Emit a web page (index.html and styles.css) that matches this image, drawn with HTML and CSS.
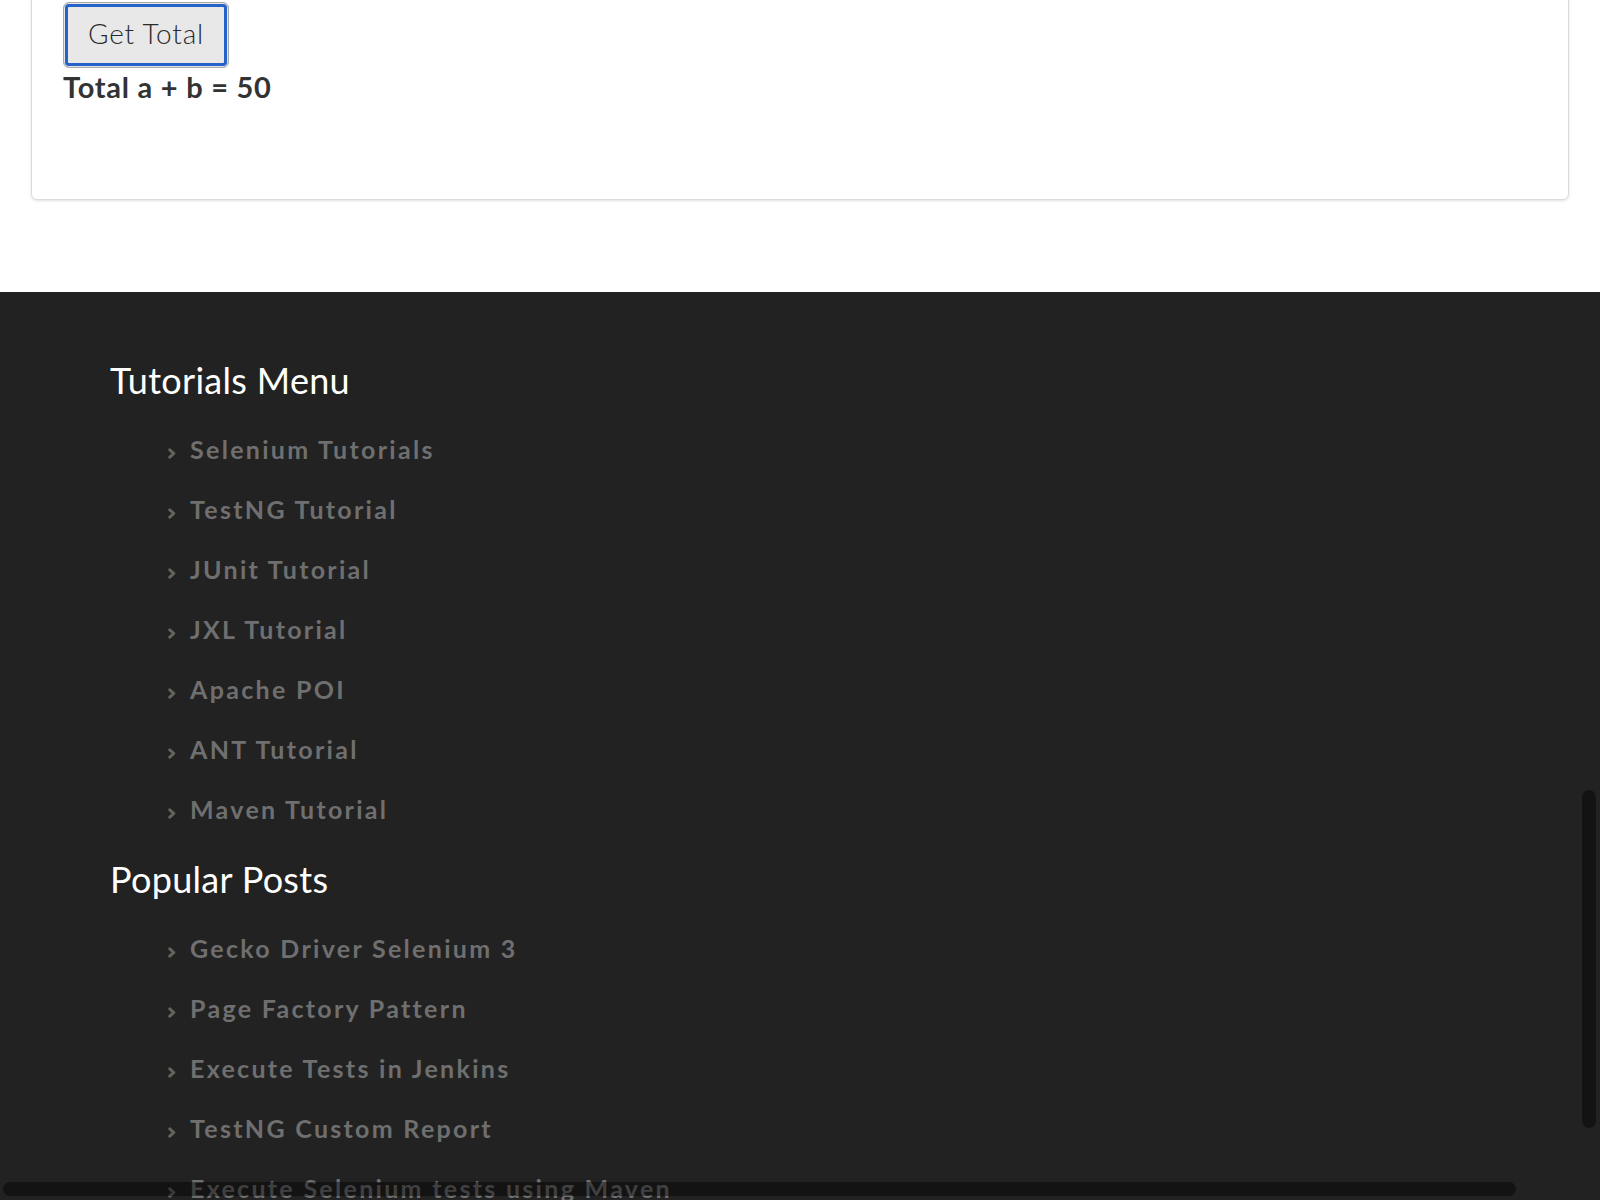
FILE: index.html
```html
<!DOCTYPE html>
<html lang="en">
<head>
<meta charset="utf-8">
<title>Get Total</title>
<link rel="stylesheet" href="styles.css">
</head>
<body>
<main class="page">
  <section class="card">
    <button class="btn" type="button">Get Total</button>
    <div class="total">Total a + b = 50</div>
  </section>
</main>
<footer class="footer">
  <h2 class="footer-title">Tutorials Menu</h2>
  <ul class="links">
    <li><svg class="chev" viewBox="0 0 8 11" width="8" height="11"><path d="M1.8 1.8 L5.8 5.5 L1.8 9.2" fill="none" stroke="currentColor" stroke-width="3" stroke-linecap="round" stroke-linejoin="round"/></svg><a href="#">Selenium Tutorials</a></li>
    <li><svg class="chev" viewBox="0 0 8 11" width="8" height="11"><path d="M1.8 1.8 L5.8 5.5 L1.8 9.2" fill="none" stroke="currentColor" stroke-width="3" stroke-linecap="round" stroke-linejoin="round"/></svg><a href="#">TestNG Tutorial</a></li>
    <li><svg class="chev" viewBox="0 0 8 11" width="8" height="11"><path d="M1.8 1.8 L5.8 5.5 L1.8 9.2" fill="none" stroke="currentColor" stroke-width="3" stroke-linecap="round" stroke-linejoin="round"/></svg><a href="#">JUnit Tutorial</a></li>
    <li><svg class="chev" viewBox="0 0 8 11" width="8" height="11"><path d="M1.8 1.8 L5.8 5.5 L1.8 9.2" fill="none" stroke="currentColor" stroke-width="3" stroke-linecap="round" stroke-linejoin="round"/></svg><a href="#">JXL Tutorial</a></li>
    <li><svg class="chev" viewBox="0 0 8 11" width="8" height="11"><path d="M1.8 1.8 L5.8 5.5 L1.8 9.2" fill="none" stroke="currentColor" stroke-width="3" stroke-linecap="round" stroke-linejoin="round"/></svg><a href="#">Apache POI</a></li>
    <li><svg class="chev" viewBox="0 0 8 11" width="8" height="11"><path d="M1.8 1.8 L5.8 5.5 L1.8 9.2" fill="none" stroke="currentColor" stroke-width="3" stroke-linecap="round" stroke-linejoin="round"/></svg><a href="#">ANT Tutorial</a></li>
    <li><svg class="chev" viewBox="0 0 8 11" width="8" height="11"><path d="M1.8 1.8 L5.8 5.5 L1.8 9.2" fill="none" stroke="currentColor" stroke-width="3" stroke-linecap="round" stroke-linejoin="round"/></svg><a href="#">Maven Tutorial</a></li>
  </ul>
  <h2 class="footer-title">Popular Posts</h2>
  <ul class="links">
    <li><svg class="chev" viewBox="0 0 8 11" width="8" height="11"><path d="M1.8 1.8 L5.8 5.5 L1.8 9.2" fill="none" stroke="currentColor" stroke-width="3" stroke-linecap="round" stroke-linejoin="round"/></svg><a href="#">Gecko Driver Selenium 3</a></li>
    <li><svg class="chev" viewBox="0 0 8 11" width="8" height="11"><path d="M1.8 1.8 L5.8 5.5 L1.8 9.2" fill="none" stroke="currentColor" stroke-width="3" stroke-linecap="round" stroke-linejoin="round"/></svg><a href="#">Page Factory Pattern</a></li>
    <li><svg class="chev" viewBox="0 0 8 11" width="8" height="11"><path d="M1.8 1.8 L5.8 5.5 L1.8 9.2" fill="none" stroke="currentColor" stroke-width="3" stroke-linecap="round" stroke-linejoin="round"/></svg><a href="#">Execute Tests in Jenkins</a></li>
    <li><svg class="chev" viewBox="0 0 8 11" width="8" height="11"><path d="M1.8 1.8 L5.8 5.5 L1.8 9.2" fill="none" stroke="currentColor" stroke-width="3" stroke-linecap="round" stroke-linejoin="round"/></svg><a href="#">TestNG Custom Report</a></li>
    <li><svg class="chev" viewBox="0 0 8 11" width="8" height="11"><path d="M1.8 1.8 L5.8 5.5 L1.8 9.2" fill="none" stroke="currentColor" stroke-width="3" stroke-linecap="round" stroke-linejoin="round"/></svg><a href="#">Execute Selenium tests using Maven</a></li>
  </ul>
</footer>
<div class="scroll-v"></div>
<div class="scroll-h"></div>
</body>
</html>
```
FILE: styles.css
```css
html, body {
  margin: 0;
  padding: 0;
}
body {
  font-family: Lato, "Open Sans", "Liberation Sans", sans-serif;
  background: #ffffff;
  color: #333333;
  height: 1200px;
  overflow: hidden;
}
.page {
  padding: 0 31px;
}
.card {
  margin-top: -40px;
  padding: 41px 31px 94px;
  border: 1px solid #dcdcdc;
  border-radius: 6px;
  box-shadow: 0 1px 3px rgba(0, 0, 0, 0.12);
  background: #fff;
}
.btn {
  display: block;
  height: 66px;
  width: 166px;
  padding: 0 0 4px;
  font-family: Lato, "Open Sans", sans-serif;
  font-weight: 300;
  font-size: 28px;
  letter-spacing: 0.8px;
  color: #2a2a2a;
  background: #e8e8e8;
  border: 1px solid #a8a8a8;
  border-radius: 6px;
  box-shadow: inset 0 0 0 1px #e6e6e6, inset 0 0 0 4px #2563c9;
}
.total {
  margin-top: 2px;
  font-size: 29px;
  font-weight: 700;
  letter-spacing: 0.75px;
  line-height: 1.2;
  color: #333;
}
.footer {
  margin-top: 92px;
  background: #222222;
  padding: 67px 0 40px 110px;
  min-height: 900px;
}
.footer-title {
  margin: 0 0 17px;
  font-size: 36px;
  font-weight: 400;
  letter-spacing: 0.3px;
  line-height: 1.2;
  color: #ffffff;
}
.links {
  list-style: none;
  margin: 0 0 19px;
  padding: 0 0 0 58px;
}
.links li {
  font-size: 25px;
  font-weight: 700;
  letter-spacing: 2.3px;
  line-height: 60px;
  color: #64645c;
  white-space: nowrap;
}
.chev {
  vertical-align: baseline;
  margin-right: 14px;
}
.links a {
  color: #6f6f6f;
  text-decoration: none;
}
.scroll-v {
  position: fixed;
  left: 1582px;
  top: 790px;
  width: 14px;
  height: 338px;
  border-radius: 7px;
  background: rgba(0, 0, 0, 0.42);
}
.scroll-h {
  position: fixed;
  left: 3px;
  top: 1182px;
  width: 1513px;
  height: 14px;
  border-radius: 7px;
  background: rgba(0, 0, 0, 0.42);
}
```
